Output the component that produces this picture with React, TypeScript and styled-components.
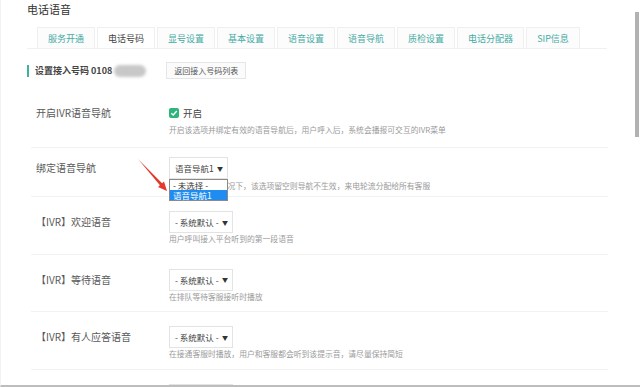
import { createGlobalStyle } from "styled-components";
import styled from "styled-components";

const GlobalStyle = createGlobalStyle`
  html, body {
    margin: 0;
    padding: 0;
    background: #fff;
  }
  body {
    font-family: "Noto Sans CJK SC", "Noto Sans", "Liberation Sans", sans-serif;
  }
`;

const Page = styled.div`
  position: relative;
  box-sizing: border-box;
  width: 640px;
  height: 387px;
  overflow: hidden;
  padding: 2px 33px 0 26px;
  border-bottom: 2px solid #bdbdbd;
  border-left: 1px solid #f2f2f2;
`;

const Title = styled.div`
  font-size: 11px;
  line-height: 14px;
  color: #333;
`;

const Tabs = styled.div`
  display: flex;
  gap: 2px;
  margin-top: 11px;
  padding-left: 10px;
  border-bottom: 1px solid #f0f0f0;
`;

const Tab = styled.div<{ $active?: boolean }>`
  height: 21px;
  line-height: 21px;
  padding: 0 10px;
  font-size: 9px;
  border: 1px solid #efefef;
  border-bottom: none;
  box-sizing: border-box;
  background: ${(p) => (p.$active ? "#fff" : "#fcfcfc")};
  color: ${(p) => (p.$active ? "#444" : "#45aba3")};
`;

const SectionHead = styled.div`
  display: flex;
  align-items: center;
  height: 17px;
  margin-top: 13px;
`;

const Bar = styled.span`
  width: 2px;
  height: 12px;
  background: #3db39b;
`;

const SectionTitle = styled.span`
  margin-left: 6px;
  font-size: 9px;
  font-weight: bold;
  color: #444;
`;

const Blur = styled.span`
  width: 32px;
  height: 12px;
  margin-left: 2px;
  border-radius: 6px;
  background: #c8c8c8;
  filter: blur(1.5px);
`;

const BackButton = styled.div`
  margin-left: 20px;
  height: 17px;
  line-height: 15px;
  box-sizing: border-box;
  padding: 0 7px;
  font-size: 8px;
  color: #555;
  background: #fbfbfb;
  border: 1px solid #e6e6e6;
`;

const Form = styled.div`
  margin: 18px 0 0 4px;
  width: 577px;
`;

const Row = styled.div<{ $pt: number; $pb: number }>`
  display: flex;
  padding: ${(p) => p.$pt}px 0 ${(p) => p.$pb}px 0;
  border-bottom: 1px solid #f2f2f2;
`;

const Label = styled.div<{ $lh: number }>`
  width: 133px;
  padding-left: 5px;
  font-size: 10px;
  line-height: ${(p) => p.$lh}px;
  color: #595959;
`;

const Field = styled.div`
  position: relative;
  display: flex;
  flex-direction: column;
  align-items: flex-start;
`;

const CheckLine = styled.div`
  display: flex;
  align-items: center;
  height: 12px;
  font-size: 9.5px;
  color: #444;
  gap: 4px;
`;

const Box = styled.span`
  width: 10px;
  height: 10px;
  border-radius: 2px;
  background: #2db57a;
  display: flex;
  align-items: center;
  justify-content: center;
`;

const Select = styled.div<{ $w: number }>`
  box-sizing: border-box;
  width: ${(p) => p.$w}px;
  height: 22px;
  display: flex;
  align-items: center;
  justify-content: space-between;
  padding: 0 4px 0 5px;
  font-size: 8.5px;
  color: #444;
  background: #fff;
  border: 1px solid #e3e3e3;
`;

const Caret = styled.span`
  font-size: 6px;
  color: #333;
`;

const Desc = styled.div<{ $mt: number }>`
  margin-top: ${(p) => p.$mt}px;
  font-size: 7.8px;
  line-height: 10px;
  color: #9a9a9a;
  white-space: nowrap;
`;

const DropList = styled.div`
  position: absolute;
  top: 22px;
  left: 0;
  width: 59px;
  box-sizing: border-box;
  border: 1px solid #8a8a8a;
  background: #fff;
  z-index: 2;
`;

const Option = styled.div<{ $on?: boolean }>`
  height: 10px;
  line-height: 10px;
  padding-left: 3px;
  font-size: 8.5px;
  color: ${(p) => (p.$on ? "#fff" : "#333")};
  background: ${(p) => (p.$on ? "#1e8cf0" : "#fff")};
`;

const Arrow = styled.svg`
  position: absolute;
  left: 130px;
  top: 155px;
  z-index: 3;
`;

const Scroll = styled.div`
  position: absolute;
  right: 1px;
  top: 12px;
  width: 4px;
  height: 125px;
  background: #b2b2b2;
`;

const tabs = ["服务开通", "电话号码", "显号设置", "基本设置", "语音设置", "语音导航", "质检设置", "电话分配器", "SIP信息"];

const ivrRows = [
  { label: "【IVR】欢迎语音", desc: "用户呼叫接入平台听到的第一段语音" },
  { label: "【IVR】等待语音", desc: "在排队等待客服接听时播放" },
  { label: "【IVR】有人应答语音", desc: "在接通客服时播放，用户和客服都会听到该提示音，请尽量保持简短" },
];

export default function App() {
  return (
    <>
      <GlobalStyle />
      <Page>
        <Title>电话语音</Title>
        <Tabs>
          {tabs.map((t) => (
            <Tab key={t} $active={t === "电话号码"}>{t}</Tab>
          ))}
        </Tabs>

        <SectionHead>
          <Bar />
          <SectionTitle>设置接入号码 0108</SectionTitle>
          <Blur />
          <BackButton>返回接入号码列表</BackButton>
        </SectionHead>

        <Form>
          <Row $pt={10} $pb={12}>
            <Label $lh={12}>开启IVR语音导航</Label>
            <Field>
              <CheckLine>
                <Box>
                  <svg width="8" height="8" viewBox="0 0 8 8">
                    <path d="M1.3 4.2 L3.2 6 L6.8 2" fill="none" stroke="#fff" strokeWidth="1.4" />
                  </svg>
                </Box>
                开启
              </CheckLine>
              <Desc $mt={6}>开启该选项并绑定有效的语音导航后，用户呼入后，系统会播报可交互的IVR菜单</Desc>
            </Field>
          </Row>

          <Row $pt={9} $pb={5}>
            <Label $lh={22}>绑定语音导航</Label>
            <Field>
              <Select $w={59}>
                语音导航1 <Caret>▼</Caret>
              </Select>
              <DropList>
                <Option>- 未选择 -</Option>
                <Option $on>语音导航1</Option>
              </DropList>
              <Desc $mt={2}>在已开启IVR的情况下，该选项留空则导航不生效，来电轮流分配给所有客服</Desc>
            </Field>
          </Row>

          {ivrRows.map((r) => (
            <Row key={r.label} $pt={14} $pb={9.5}>
              <Label $lh={22}>{r.label}</Label>
              <Field>
                <Select $w={64}>
                  - 系统默认 - <Caret>▼</Caret>
                </Select>
                <Desc $mt={1}>{r.desc}</Desc>
              </Field>
            </Row>
          ))}

          {/* next row, only its select's top edge is in view */}
          <Row $pt={14} $pb={0}>
            <Label $lh={22} />
            <Field>
              <Select $w={64} />
            </Field>
          </Row>
        </Form>

        <Arrow width="40" height="40" viewBox="0 0 40 40">
          <polygon points="7,4 31.1,28.3 33,26.6 36,36 27,32 28.9,30.3" fill="#e23b2e" />
        </Arrow>
        <Scroll />
      </Page>
    </>
  );
}
